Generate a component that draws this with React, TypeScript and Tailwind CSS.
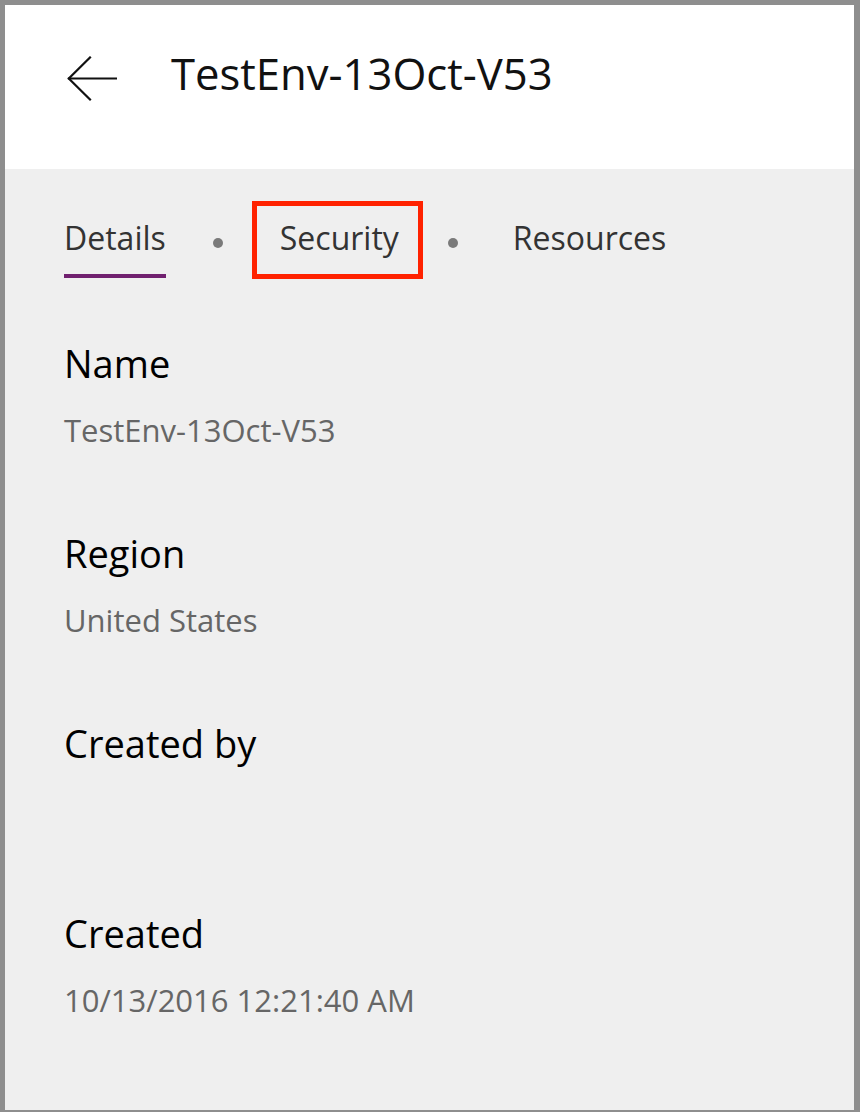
import React from 'react';

const copy = {
  title: 'TestEnv-13Oct-V53',
  tabs: ['Details', 'Security', 'Resources'],
  fields: [
    { label: 'Name', value: 'TestEnv-13Oct-V53' },
    { label: 'Region', value: 'United States' },
    { label: 'Created by', value: '' },
    { label: 'Created', value: '10/13/2016 12:21:40 AM' },
  ],
};

function BackArrow() {
  return (
    <svg width="50" height="46" viewBox="0 0 50 46" fill="none" stroke="#111" strokeWidth="2.2" strokeLinecap="square">
      <path d="M2 22.5H49" />
      <path d="M23 1.5L1.8 22.5L23 43.5" />
    </svg>
  );
}

function Dot() {
  return <span className="block w-[10px] h-[10px] rounded-full bg-[#7a7a7a] mt-[20px]" />;
}

export default function App() {
  return (
    <div
      className="w-[860px] h-[1112px] flex flex-col border-[#8e8e8e] border-t-[5px] border-l-[5px] border-r-[6px] border-b-[2px] bg-[#efefef]"
      style={{ fontFamily: '"Open Sans", "Noto Sans", sans-serif' }}
    >
      {/* Header */}
      <div className="h-[164px] shrink-0 bg-white flex items-start">
        <div className="mt-[51px] ml-[62px]">
          <BackArrow />
        </div>
        <h1 className="mt-[46px] ml-[54px] text-[43.6px] leading-[44px] text-[#111] font-normal">
          {copy.title}
        </h1>
      </div>

      {/* Body */}
      <div className="flex-1 pl-[59px]">
        {/* Tabs */}
        <div className="flex items-start pt-[49px]">
          <div className="flex flex-col">
            <span className="text-[32px] leading-[40px] text-[#333]">{copy.tabs[0]}</span>
            <span className="block h-[4px] mt-[16px] bg-[#70206f]" />
          </div>
          <div className="ml-[47px]">
            <Dot />
          </div>
          <div className="ml-[57px] relative">
            <span className="text-[32px] leading-[40px] text-[#333]">{copy.tabs[1]}</span>
            <span className="absolute -left-[28px] -right-[24px] -top-[17px] h-[78px] border-[5px] border-[#ff2200]" />
          </div>
          <div className="ml-[49px]">
            <Dot />
          </div>
          <span className="ml-[55px] text-[32px] leading-[40px] text-[#333]">{copy.tabs[2]}</span>
        </div>

        {/* Fields */}
        <div className="mt-[62px] flex flex-col">
          {copy.fields.map((f, i) => (
            <div key={i} className="h-[190px]">
              <div className="text-[38px] leading-[46px] text-black">{f.label}</div>
              {f.value && (
                <div className="mt-[24px] text-[31px] leading-[40px] text-[#666]">{f.value}</div>
              )}
            </div>
          ))}
        </div>
      </div>
    </div>
  );
}
